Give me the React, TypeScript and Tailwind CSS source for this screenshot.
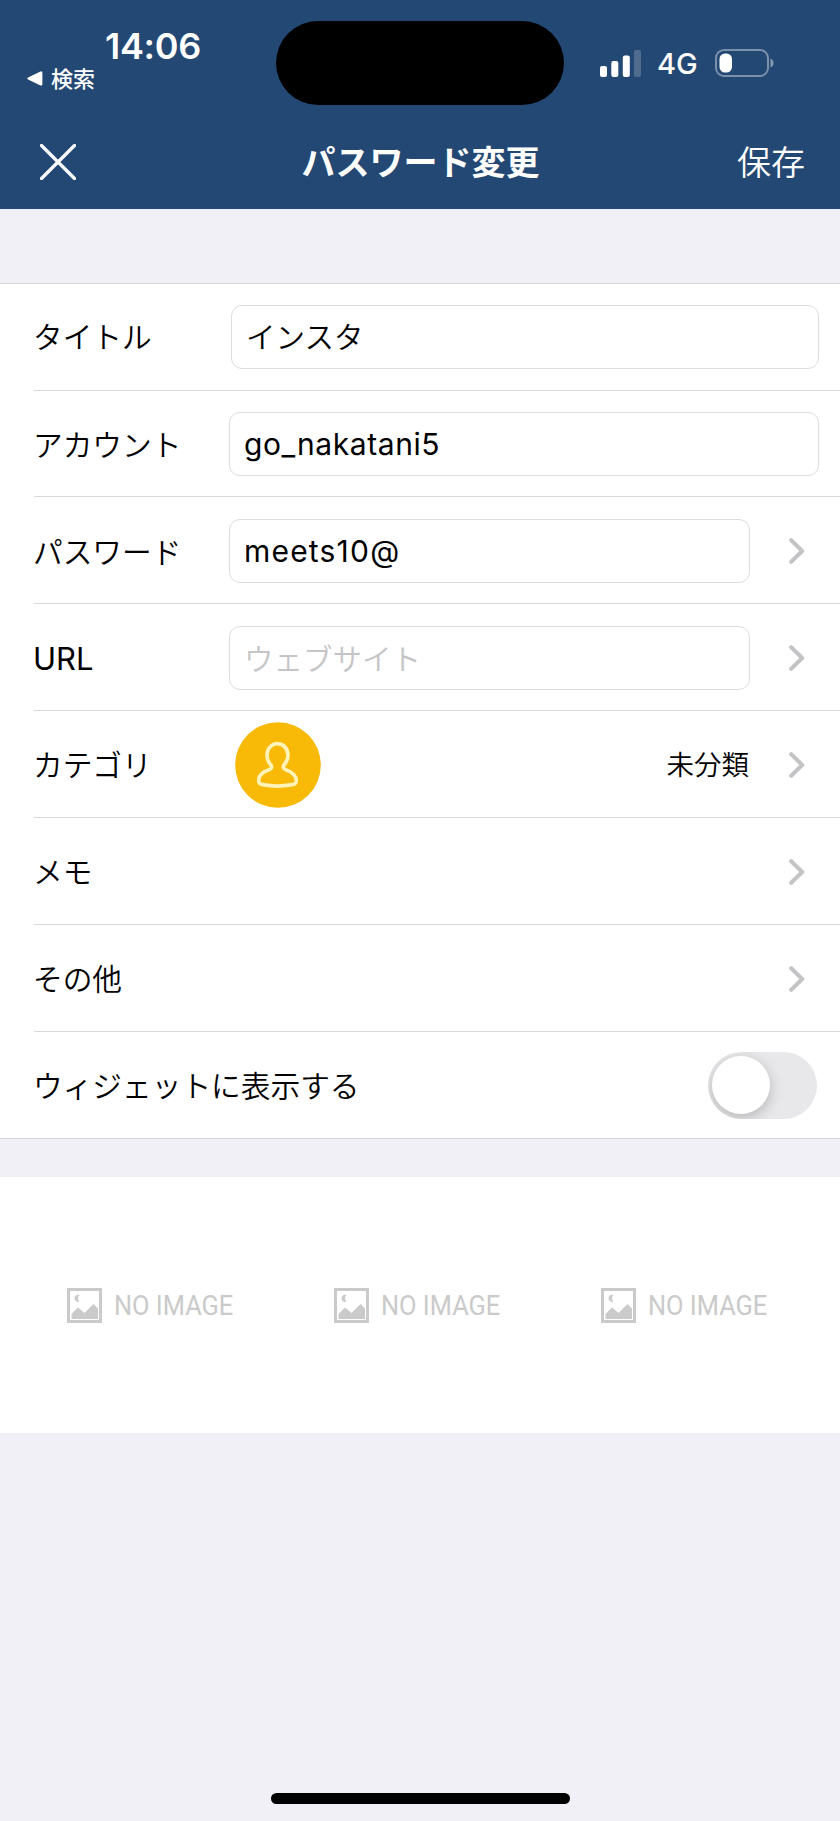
import React from 'react';

const Chevron = () => (
  <svg className="w-4 h-[26px] shrink-0" viewBox="0 0 16 26" fill="none">
    <path d="M2.2 2.2 L13.2 13 L2.2 23.8" stroke="#c4c4c6" strokeWidth="4" strokeLinecap="round" strokeLinejoin="round" />
  </svg>
);

const PersonBadge = () => (
  <svg className="w-[86px] h-[86px]" viewBox="705 65 258 258" fill="none">
    <circle cx="834" cy="194" r="128.5" fill="#f8ba06" />
    <path
      d="M832 130 C849 130 864 144 864 165 C864 181 858 187 852 194 C848 200 850 205 857 208 C877 215 889 225 889 241 C889 249 886 251 877 253 C850 258 813 258 788 253 C779 251 776 249 776 241 C776 225 788 214 807 208 C815 205 817 200 813 194 C806 187 801 181 801 165 C801 144 815 130 832 130 Z"
      stroke="#fff3b8"
      strokeWidth="11"
      strokeLinejoin="round"
    />
  </svg>
);

const NoImage = () => (
  <div className="flex w-[267px] shrink-0 items-center gap-[12px]">
    <svg className="w-[35px] h-[35px] shrink-0" viewBox="0 0 35 35" fill="none">
      <rect x="1.5" y="1.5" width="32" height="32" stroke="#cacaca" strokeWidth="3" />
      <path d="M4.5 31 V26 L11 19.5 L17.5 25 L26.5 16 L31 20.5 V31 Z" fill="#cacaca" />
      <path d="M12.5 7 A3.6 3.6 0 1 0 12.5 13.6 A4.4 4.4 0 0 1 12.5 7 Z" fill="#cacaca" />
    </svg>
    <span className="origin-left scale-x-[0.94] whitespace-nowrap pt-0.5 font-[Roboto] text-[27px] leading-none text-[#cacaca]">NO IMAGE</span>
  </div>
);

const StatusBar = () => (
  <div className="flex h-[115px] justify-between">
    <div className="w-[276px] pt-[28px]">
      <div className="pl-[105px] font-[Inter] text-[36px] font-semibold leading-[36px] tracking-[-0.3px]">14:06</div>
      <div className="flex items-center gap-[8px] pl-[27px] pt-px">
        <svg className="w-4 h-[15px]" viewBox="0 0 16 15">
          <path d="M1 6.6 L13.5 0.4 Q15.4 0 15.4 2 V13 Q15.4 15 13.5 14.4 L1 8.4 Q-0.4 7.5 1 6.6 Z" fill="#fff" />
        </svg>
        <span className="pb-0.5 text-[22px] font-medium leading-6">検索</span>
      </div>
    </div>
    <div className="mt-[20.5px] h-[84px] w-[288px] rounded-full bg-black"></div>
    <div className="mt-5 flex h-[84px] w-[276px] items-center pl-[36px] pt-0.5">
      <svg className="w-[41px] h-[27px]" viewBox="0 0 41 27" fill="#fff">
        <rect x="0" y="16" width="7" height="11" rx="2" />
        <rect x="11.3" y="11" width="7" height="16" rx="2" />
        <rect x="22.8" y="5.5" width="7" height="21.5" rx="2" />
        <rect x="34" y="0" width="7" height="27" rx="2" opacity="0.2" />
      </svg>
      <span className="w-[74px] pl-4 font-[Inter] text-[29px] font-medium leading-none">4G</span>
      <svg className="w-[59px] h-7" viewBox="0 0 59 28" fill="none">
        <rect x="1" y="1" width="52" height="26" rx="8" stroke="#fff" strokeOpacity="0.4" strokeWidth="2" />
        <rect x="4.5" y="4.5" width="12.5" height="19" rx="5.5" fill="#fff" />
        <path d="M55.5 9.5 Q58.5 11 58.5 14 Q58.5 17 55.5 18.5 Z" fill="#fff" fillOpacity="0.45" />
      </svg>
    </div>
  </div>
);

const rows = [
  { label: 'タイトル', value: 'インスタ', wide: true, height: 'h-[107px] pb-px' },
  { label: 'アカウント', value: 'go_nakatani5', wide: true, height: 'h-[106px] pt-px', font: 'font-[Inter] text-[30px] font-normal tracking-[0.6px]' },
  { label: 'パスワード', value: 'meets10@', height: 'h-[107px] pt-0.5', font: 'font-[Inter] text-[30px] font-normal tracking-[1.2px]' },
  { label: 'URL', placeholder: 'ウェブサイト', height: 'h-[107px] pt-0.5' },
  { label: 'カテゴリ', category: '未分類', height: 'h-[107px] pt-px' },
  { label: 'メモ', height: 'h-[107px] pt-px' },
  { label: 'その他', height: 'h-[107px] pt-px' },
  { label: 'ウィジェットに表示する', toggle: true, height: 'h-[106px]' },
];

const App = () => {
  return (
    <div className="flex h-[1821px] w-[840px] flex-col overflow-hidden bg-[#f1f0f6] font-['Noto_Sans_CJK_JP',sans-serif] text-black">
      <header className="h-[209px] bg-[#234874] text-white">
        <StatusBar />
        <nav className="flex h-[94px] items-center justify-between pl-10 pr-[35px]">
          <svg className="w-9 h-9" viewBox="0 0 36 36" fill="none">
            <path d="M1.5 1.5 L34.5 34.5 M34.5 1.5 L1.5 34.5" stroke="#fff" strokeWidth="3.2" strokeLinecap="round" />
          </svg>
          <h1 className="pb-0.5 pl-[28px] text-[34px] font-bold leading-none">パスワード変更</h1>
          <span className="pb-0.5 text-[34px] font-[350] leading-none">保存</span>
        </nav>
      </header>

      <section className="mt-[74px] border-t border-[#d6d6da] bg-white font-[350]">
        {rows.map((row, index) => (
          <div key={row.label} className={row.toggle ? 'border-b border-[#d6d6da]' : ''}>
            <div className={`ml-[34px] flex items-center ${row.height} ${row.toggle ? '' : 'border-b border-[#d9d9d9]'}`}>
              <span
                className={`shrink-0 whitespace-nowrap leading-none ${row.label === 'URL' ? 'font-[Inter] text-[31px] font-normal' : 'pb-px text-[29.7px]'} ${row.toggle ? '' : index === 0 ? 'w-[197px]' : 'w-[195px]'}`}
              >
                <span className="-ml-px">{row.label}</span>
              </span>

              {(row.value || row.placeholder) && (
                <div
                  className={`flex h-16 items-center rounded-[11px] border border-[#dddddf] pl-[14px] leading-none ${row.wide ? 'mr-[21px] flex-1' : 'w-[521px]'} ${row.font || 'pb-px text-[29.5px]'}`}
                >
                  {row.value || <span className="text-[#c5c5c7]">{row.placeholder}</span>}
                </div>
              )}

              {row.category && (
                <div className="flex w-[521px] items-center justify-between pl-[6px] pr-px">
                  <PersonBadge />
                  <span className="pb-px text-[27.5px] leading-none">{row.category}</span>
                </div>
              )}

              {row.toggle ? (
                <div className="ml-auto mr-[23px] flex h-[67px] w-[109px] items-center overflow-hidden rounded-full bg-[#e8e8ea] pl-1">
                  <div className="h-[58px] w-[58px] rounded-full bg-white shadow-[0_4px_14px_rgba(0,0,0,0.22)]"></div>
                </div>
              ) : (
                !row.wide && (
                  <div className="ml-auto mr-[35px]">
                    <Chevron />
                  </div>
                )
              )}
            </div>
          </div>
        ))}
      </section>

      <section className="mt-[38px] flex h-[256px] items-center overflow-hidden bg-white pl-[67px]">
        <NoImage />
        <NoImage />
        <NoImage />
      </section>

      <div className="mx-auto mb-[17px] mt-auto h-[11px] w-[299px] rounded-full bg-black"></div>
    </div>
  );
};

export default App;
